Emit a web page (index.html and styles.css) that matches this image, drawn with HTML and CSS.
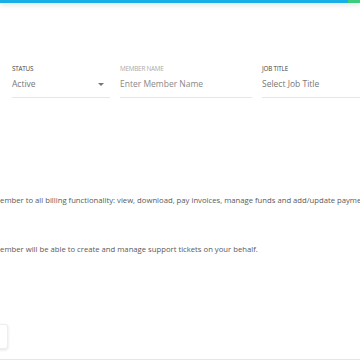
FILE: index.html
```html
<!DOCTYPE html>
<html lang="en">
<head>
    <meta charset="UTF-8">
    <title>Member</title>
    <link rel="stylesheet" href="styles.css">
</head>
<body>
    <!--top progress bar-->
    <div class="topbar">
        <div class="topbar-blue"></div>
        <div class="topbar-green"></div>
    </div>

    <div class="fields">
        <div class="field">
            <div class="label">Status</div>
            <div class="value">
                <span>Active</span>
                <span class="caret"></span>
            </div>
        </div>
        <div class="field">
            <div class="label label-light">Member Name</div>
            <div class="value placeholder">Enter Member Name</div>
        </div>
        <div class="field">
            <div class="label">Job Title</div>
            <div class="value">Select Job Title</div>
        </div>
    </div>

    <div class="texts">
        <p class="desc desc-first">member to all billing functionality: view, download, pay invoices, manage funds and add/update payment methods.</p>
        <p class="desc desc-second">member will be able to create and manage support tickets on your behalf.</p>
    </div>

    <div class="bottom">
        <div class="card"></div>
    </div>
    <div class="footer-line"></div>
</body>
</html>
```

FILE: styles.css
```css
*{
    margin: 0px;
    padding: 0px;
    box-sizing: border-box;
}
html, body
{
    width: 360px;
    height: 360px;
    overflow: hidden;
    background: #FFFFFF;
    font-family: "Open Sans", "Liberation Sans", sans-serif;
}
.topbar
{
    display: flex;
    height: 3px;
    box-shadow: 0 2px 5px rgba(0, 0, 0, 0.14);
}
.topbar-blue
{
    flex: 1;
    background: #1AAEE6;
}
.topbar-green
{
    width: 12px;
    background: #3CCB7F;
}
.fields
{
    display: grid;
    grid-template-columns: 98px 132px 1fr;
    column-gap: 10px;
    padding-left: 12px;
    margin-top: 62px;
}
.field
{
    border-bottom: 1px solid #E6E6E6;
    height: 33px;
}
.label
{
    font-size: 6.3px;
    line-height: 8px;
    color: #444444;
    text-transform: uppercase;
    letter-spacing: -0.2px;
}
.label-light
{
    color: #AAAAAA;
}
.value
{
    display: flex;
    justify-content: space-between;
    align-items: center;
    margin-top: 4px;
    font-size: 8.5px;
    line-height: 14px;
    color: #777777;
    white-space: nowrap;
}
.placeholder
{
    color: #8A8A8A;
}
.caret
{
    width: 0;
    height: 0;
    margin-right: 6px;
    border-left: 3px solid transparent;
    border-right: 3px solid transparent;
    border-top: 3px solid #777777;
}
.texts
{
    width: 360px;
    overflow: hidden;
}
.desc
{
    font-size: 7.7px;
    line-height: 10px;
    color: #5A5A5A;
    white-space: nowrap;
    text-indent: -7px;
}
.desc-first
{
    margin-top: 97px;
}
.desc-second
{
    margin-top: 39px;
}
.bottom
{
    height: 105px;
    padding-top: 70px;
}
.card
{
    width: 10px;
    height: 25px;
    margin-left: -2px;
    border-radius: 0 3px 3px 0;
    background: #FFFFFF;
    border: 1px solid #EEEEEE;
    box-shadow: 0 1px 3px rgba(0, 0, 0, 0.12);
}
.footer-line
{
    height: 2px;
    background: #E6E6E6;
}
```
